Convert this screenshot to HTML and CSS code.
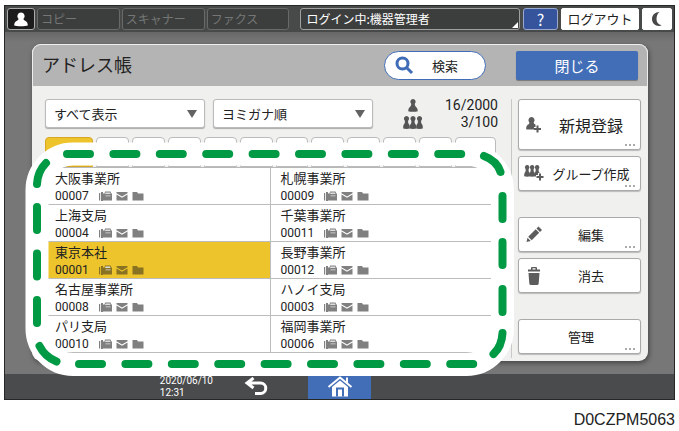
FILE: index.html
```html
<!DOCTYPE html>
<html lang="ja">
<head>
<meta charset="utf-8">
<meta name="viewport" content="width=device-width, initial-scale=1">
<title>アドレス帳</title>
<link rel="stylesheet" href="styles.css">
</head>
<body>
<svg class="symbols" aria-hidden="true">
  <symbol id="person" viewBox="0 0 14 14"><path d="M7 0a3.700 3.700 0 0 1 2.400 6.500c.2.800.8 1.300 2.100 1.900 1.600.8 2.300 2 2.300 4.600-2 1-11.600 1-13.600 0 0-2.600.7-3.800 2.300-4.600C3.800 7.800 4.400 7.300 4.600 6.500A3.700 3.700 0 0 1 7 0z"/></symbol>
  <symbol id="single" viewBox="0 0 10 13"><path d="M5 0a2.700 2.700 0 0 1 1.900 4.600c-.4 1 .1 2.400 1.100 3.300 1.300 1 1.800 2.400 1.700 4.400-2 .7-7.400.7-9.400 0-.1-2 .4-3.400 1.700-4.400 1-.9 1.500-2.300 1.100-3.300A2.700 2.700 0 0 1 5 0z"/></symbol>
  <symbol id="group" viewBox="0 0 20 13"><path id="pawn" d="M3.500 0a2.600 2.600 0 0 1 1.900 4.300c-.5.8-.4 2.600.2 3.500 1 1 1.300 2.300 1.200 4.700-1.500.6-5.100.6-6.600 0-.1-2.400.2-3.700 1.200-4.700.6-.9.7-2.700.2-3.500A2.600 2.600 0 0 1 3.500 0z"/><use href="#pawn" x="6.500"/><use href="#pawn" x="13"/></symbol>
  <symbol id="services" viewBox="0 0 45 10">
    <path d="M0 2h1.200v7.500H0zM2 1h2v9H2zM4 2.500h1.500L6 .5h5.500l.8 2h.7v7H4z"/>
    <path class="cut" d="M6.500 1.500h4.500l.5 1.500h-5.500zM6.500 4.500h5v.8h-5z"/>
    <path d="M17.500 1h11v1.200L23 5.500 17.500 2.300zM17.500 3.600L23 6.800l5.500-3.200V9.500h-11z"/>
    <path d="M33.500 1H38l1 1.500h5.500v7h-11z"/>
  </symbol>
</svg>

<main class="screen">
  <header class="topbar">
    <button class="top-btn user" aria-label="ユーザー"><svg width="14" height="15"><use href="#person"/></svg></button>
    <button class="top-btn app" disabled>コピー</button>
    <button class="top-btn app" disabled>スキャナー</button>
    <button class="top-btn app" disabled>ファクス</button>
    <button class="top-btn login">ログイン中:機器管理者</button>
    <button class="top-btn help">?</button>
    <button class="top-btn light logout">ログアウト</button>
    <button class="top-btn light sleep" aria-label="スリープ"><svg width="14" height="16" viewBox="0 0 14 16"><path d="M9.500 1C5 1 2 4 2 8s3 7 7 7c1 0 2-.3 2.700-.8C8.500 13.500 6.500 11.500 6.500 8.200 6.500 5 7.500 2.500 9.500 1z"/></svg></button>
  </header>

  <div class="workspace">
    <section class="dialog">
      <header class="dialog-head">
        <h1>アドレス帳</h1>
        <button class="search"><svg width="19" height="19" viewBox="0 0 19 19"><circle cx="7.500" cy="7.500" r="5.500"/><path d="M11.500 11.500l5.500 5.500"/></svg>検索</button>
        <button class="close">閉じる</button>
      </header>

      <div class="dialog-body">
        <div class="book">
          <div class="filters">
            <span class="picker"><select aria-label="表示"><option>すべて表示</option></select></span>
            <span class="picker"><select aria-label="並び順"><option>ヨミガナ順</option></select></span>
            <div class="counts">
              <svg width="10" height="13"><use href="#single"/></svg><span>16/2000</span>
              <svg width="20" height="13"><use href="#group"/></svg><span>3/100</span>
            </div>
          </div>
          <div class="tabs">
            <button class="tab first" aria-label="見出し1"></button>
            <button class="tab" aria-label="見出し2"></button>
            <button class="tab" aria-label="見出し3"></button>
            <button class="tab" aria-label="見出し4"></button>
            <button class="tab" aria-label="見出し5"></button>
            <button class="tab" aria-label="見出し6"></button>
            <button class="tab" aria-label="見出し7"></button>
            <button class="tab" aria-label="見出し8"></button>
            <button class="tab" aria-label="見出し9"></button>
            <button class="tab" aria-label="見出し10"></button>
            <button class="tab" aria-label="見出し11"></button>
            <button class="tab last" aria-label="見出し12"></button>
          </div>
          <div class="entries">
            <button class="entry"><span class="name">大阪事業所</span><span class="meta">00007<svg width="45" height="10"><use href="#services"/></svg></span></button>
            <button class="entry"><span class="name">札幌事業所</span><span class="meta">00009<svg width="45" height="10"><use href="#services"/></svg></span></button>
            <button class="entry"><span class="name">上海支局</span><span class="meta">00004<svg width="45" height="10"><use href="#services"/></svg></span></button>
            <button class="entry"><span class="name">千葉事業所</span><span class="meta">00011<svg width="45" height="10"><use href="#services"/></svg></span></button>
            <button class="entry selected" aria-pressed="true"><span class="name">東京本社</span><span class="meta">00001<svg width="45" height="10"><use href="#services"/></svg></span></button>
            <button class="entry"><span class="name">長野事業所</span><span class="meta">00012<svg width="45" height="10"><use href="#services"/></svg></span></button>
            <button class="entry"><span class="name">名古屋事業所</span><span class="meta">00008<svg width="45" height="10"><use href="#services"/></svg></span></button>
            <button class="entry"><span class="name">ハノイ支局</span><span class="meta">00003<svg width="45" height="10"><use href="#services"/></svg></span></button>
            <button class="entry"><span class="name">パリ支局</span><span class="meta">00010<svg width="45" height="10"><use href="#services"/></svg></span></button>
            <button class="entry"><span class="name">福岡事業所</span><span class="meta">00006<svg width="45" height="10"><use href="#services"/></svg></span></button>
          </div>
          <!-- Dashed marker round the address list -->
          <svg class="marker" viewBox="25 141 490 236" preserveAspectRatio="none" aria-hidden="true">
            <rect x="37" y="154" width="465.500" height="210.500" rx="36"/>
            <path d="M67 154h23M113.400 154h23M159.800 154h23M206.200 154h23M252.600 154h23M299 154h23M345.400 154h23M391.800 154h23M438.200 154h23
              M484 156C492 159 498 164 500.500 172
              M502.500 196v23M502.500 242v23M502.500 289v23M502.500 333C502 343 499 349 493.500 354
              M79 364h23M125.400 364h23M171.800 364h23M218.200 364h23M264.600 364h23M311 364h23M357.400 364h23M403.800 364h23M450.200 364h23
              M56.500 361.500C49 358.500 43 353 39.500 346
              M37 323v-23M37 276.500v-23M37 230v-23M37 184C37.500 174 41 168 46 163"/>
          </svg>
        </div>

        <aside class="actions">
          <button class="action new more"><svg width="16" height="16" viewBox="0 0 16 16"><path d="M5.500 0a3.200 3.200 0 0 1 2.200 5.400c0 .8.300 1.300 1.800 2.100L9.500 10H8v2.500H.5c-.4-.6-.4-1 -.3-1.500C.4 8.600 1.500 8 2.500 7.300 3.300 6.700 3.400 6.200 3.300 5.400A3.200 3.200 0 0 1 5.500 0z"/><path class="plus" d="M11.500 8.500v7M8 12h7"/></svg><span>新規登録</span></button>
          <button class="action more"><svg width="20" height="17" viewBox="0 0 20 17"><use href="#pawn" transform="scale(.9)"/><use href="#pawn" transform="translate(5)scale(.9)"/><use href="#pawn" transform="translate(10)scale(.9)"/><path class="halo" d="M16 8v8M12 12h8"/><path class="plus" d="M16 8.500v7M12.500 12h7"/></svg><span>グループ作成</span></button>
          <button class="action spaced more"><svg width="17" height="17" viewBox="0 0 17 17"><path d="M12.500.5l3.500 3.500-2 2-3.500-3.500zM9.700 3.200l3.500 3.500-7.500 7.500-3.500-3.500zM1.500 11.700l3.200 3.200L.5 16z"/></svg><span>編集</span></button>
          <button class="action"><svg width="14" height="18" viewBox="0 0 14 18"><path d="M4 2.500V1Q4 0 5 0h4q1 0 1 1v1.500h3v2H1v-2zM5.500 1.300v1.200h3V1.300zM1.500 6h11l-.8 10.500q-.2 1.500-1.700 1.500H4q-1.500 0-1.700-1.500z"/></svg><span>消去</span></button>
          <button class="action spaced more plain"><span>管理</span></button>
        </aside>
      </div>
    </section>
  </div>

  <footer class="bottombar">
    <div class="status">
      <time datetime="2020-06-10T12:31">2020/06/10<br>12:31</time>
      <button class="back" aria-label="戻る"><svg width="24" height="19" viewBox="0 0 24 19"><path d="M3 6h13.500a5 5 0 0 1 0 10.500H11M9.500 1L3 6l6.500 5"/></svg></button>
    </div>
    <button class="home" aria-label="ホーム"><svg width="26" height="21" viewBox="0 0 26 21"><path d="M1.500 11L13 1.500 24.500 11M20 7.500V1.500"/><path class="house" d="M5 11l8-6.500 8 6.500v9.500H5z"/><path class="door" d="M10 20.500v-8h6v8"/></svg></button>
  </footer>
</main>
<p class="figure-id">D0CZPM5063</p>
</body>
</html>
```
FILE: styles.css
```css
* { box-sizing: border-box; }

body {
  margin: 5px 4px;
  background: #fff;
  color: #222;
  font: 13px/18px "Noto Sans CJK JP", sans-serif;
}

button, select {
  margin: 0;
  padding: 0;
  border: 0;
  color: inherit;
  font: inherit;
}

svg { flex: none; }

.symbols {
  position: absolute;
  width: 0;
  height: 0;
}

.screen {
  border: 1px solid #262827;
  background: #767676;
}

/* Top bar */
.topbar {
  display: flex;
  gap: 2px;
  height: 26px;
  padding: 2px;
  background: #484a4a;
}

.top-btn {
  height: 22px;
  border: 1px solid #686a69;
  border-radius: 3px;
  background: #3c3e3d;
  font-size: 12px;
  line-height: 18px;
}

.user {
  display: grid;
  place-items: center;
  width: 28px;
  border-color: #aaa;
  background: #1c1c1c;
  fill: #fff;
}

.app {
  flex: 78 1 0;
  padding-left: 3px;
  color: #747675;
  text-align: left;
}

.login {
  flex: 213 1 0;
  position: relative;
  margin: 0 1px 0 9px;
  padding-left: 5px;
  border-color: #a0a0a0;
  color: #fff;
  text-align: left;
}

.login::after {
  content: "";
  position: absolute;
  right: 1px;
  bottom: 1px;
  border: 3px solid;
  border-color: transparent #fff #fff transparent;
}

.help {
  width: 35px;
  border-color: #9aa9cf;
  background: #35549c;
  color: #fff;
  font-size: 16px;
}

.light {
  border-color: #fff;
  border-radius: 2px;
  background: #fff;
}

.logout {
  width: 78px;
  margin: 0 1px;
  font-size: 13px;
}

.sleep {
  display: grid;
  place-items: center;
  width: 30px;
  fill: #484848;
}

/* Dialog */
.workspace {
  padding: 12px 26px 13px 27px;
  background: linear-gradient(#676767, #777 10px);
}

.dialog {
  border-radius: 9px;
  background: #f0f0ef;
  box-shadow: 1px 2px 5px #444;
}

.dialog-head {
  display: flex;
  align-items: center;
  height: 42px;
  padding: 0 9px;
  border: solid #eee;
  border-width: 1px 1px 0;
  border-radius: 9px 9px 0 0;
  background: #b4b4b4;
}

h1 {
  flex: 1;
  margin: 0;
  padding-bottom: 4px;
  font-size: 18px;
  font-weight: 400;
}

.search {
  display: flex;
  align-items: center;
  gap: 18px;
  width: 102px;
  height: 29px;
  margin-right: 30px;
  padding-left: 10px;
  border: 1px solid #3f6cb6;
  border-radius: 15px;
  background: #fff;
}

.search svg {
  fill: none;
  stroke: #3f6cb6;
  stroke-width: 3;
}

.close {
  width: 122px;
  height: 29px;
  border-radius: 2px;
  background: #426db7;
  box-shadow: 0 1px 1px #777;
  color: #fff;
  font-size: 15px;
}

.dialog-body {
  display: grid;
  grid-template-columns: minmax(0, 1fr) 130px;
  gap: 13px;
  padding: 13px 7px 3px 13px;
}

.book { position: relative; }

.filters {
  display: flex;
  gap: 8px;
  height: 29px;
}

.picker {
  position: relative;
  width: 160px;
}

.picker select {
  appearance: none;
  width: 100%;
  height: 29px;
  padding-left: 8px;
  border: 1px solid #bbb;
  border-radius: 3px;
  background: #fff;
  box-shadow: 0 1px 1px #aaa;
}

.picker::after {
  content: "";
  position: absolute;
  top: 11px;
  right: 8px;
  border: solid transparent;
  border-width: 8px 5px 0;
  border-top-color: #626262;
  pointer-events: none;
}

.counts {
  flex: 1;
  display: grid;
  grid-template-columns: 20px 1fr;
  grid-auto-rows: 17px;
  place-items: center;
  align-self: center;
  margin: 0 0 0 22px;
  fill: #555;
  font: 14px/17px Roboto, sans-serif;
}

.counts span { justify-self: end; }

.tabs {
  display: flex;
  gap: 3px;
  height: 30px;
  margin: 9px 2px 0 0;
}

.tab {
  flex: 1;
  border: 1px solid #bbb;
  border-radius: 4px 4px 0 0;
  background: #fff;
}

.tab.first {
  flex: none;
  width: 48px;
  border-color: #d8a725;
  background: #edc42b;
}

.tab.last {
  flex: none;
  width: 41px;
}

.entries {
  display: grid;
  grid-template-columns: 1fr 1fr;
  margin-right: 2px;
  border-top: 1px solid #b8b8b8;
}

.entry {
  display: flex;
  flex-direction: column;
  height: 37px;
  padding: 1px 0 0 10px;
  border-bottom: 1px solid #bcbcbc;
  background: #fff;
  text-align: left;
}

.entry:nth-child(odd) { border-right: 1px solid #bcbcbc; }

.entry.selected { background: #edc42b; }

.meta {
  display: flex;
  align-items: center;
  gap: 10px;
  font: 12px/18px Roboto, sans-serif;
  fill: #808080;
}

.cut { fill: #ddd; }

.selected .meta { fill: #897323; }

.selected .cut { fill: #c9a92c; }

.marker {
  position: absolute;
  top: 42px;
  left: -20px;
  width: calc(100% + 37px);
  height: 236px;
  fill: none;
  pointer-events: none;
}

.marker rect {
  stroke: #fff;
  stroke-width: 23;
}

.marker path {
  stroke: #009944;
  stroke-width: 8;
  stroke-linecap: round;
}

.actions {
  display: flex;
  flex-direction: column;
  gap: 6px;
  padding: 0 0 4px 6px;
  border-left: 1px solid #c8c8c8;
}

.action {
  position: relative;
  display: grid;
  grid-template-columns: 20px 1fr;
  align-items: center;
  justify-items: center;
  height: 35px;
  padding: 0 2px 0 5px;
  border: 1px solid #aaa;
  border-radius: 3px;
  background: #fff;
  box-shadow: 0 1px 1px #bbb;
  fill: #5c5c5c;
}

.action.new {
  height: 51px;
  font-size: 16px;
}

.action.spaced { margin-top: 20px; }

.action.plain { grid-template-columns: 1fr; }

.more::after {
  content: "";
  position: absolute;
  right: 5px;
  bottom: 3px;
  width: 10px;
  border-bottom: 2px dotted #aaa;
}

.plus {
  stroke: #5c5c5c;
  stroke-width: 2;
}

.halo {
  stroke: #fff;
  stroke-width: 4;
}

/* Bottom bar */
.bottombar {
  display: grid;
  grid-template-columns: 1fr 63px 1fr;
  height: 25px;
  background: #4a4b4c;
  color: #fff;
}

.status {
  display: flex;
  justify-content: flex-end;
  align-items: center;
  gap: 31px;
  padding-right: 40px;
}

time { font: 10px/12px Roboto, sans-serif; }

.back {
  height: 19px;
  background: none;
}

.back svg, .home svg {
  display: block;
  fill: none;
  stroke: #fff;
  stroke-width: 3;
}

.home {
  display: grid;
  place-items: center;
  background: #426db7;
}

.home path { stroke-width: 2; }

.home .house {
  fill: #fff;
  stroke: none;
}

.home .door { stroke: #426db7; }

.figure-id {
  margin: 11px 0 0;
  font: 16px/18px "Liberation Sans", sans-serif;
  text-align: right;
}
```
